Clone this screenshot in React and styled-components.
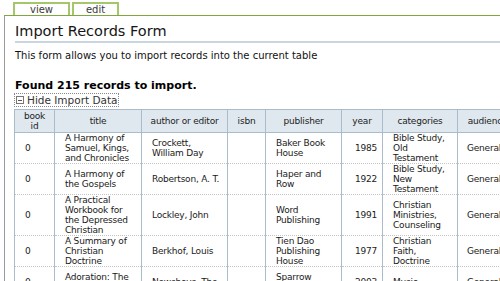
import React from "react";
import styled, { createGlobalStyle } from "styled-components";

const GlobalStyle = createGlobalStyle`
  html, body {
    margin: 0;
    padding: 0;
    background: #ffffff;
    overflow: hidden;
  }
  body {
    font-family: "DejaVu Sans", Verdana, sans-serif;
    color: #111;
  }
`;

const Page = styled.div`
  width: 500px;
  height: 281px;
  overflow: hidden;
`;

const Tabs = styled.div`
  display: flex;
  gap: 2px;
  padding: 2px 0 0 13px;
  height: 13px;
`;

const Tab = styled.div`
  width: ${(p) => p.$width}px;
  box-sizing: border-box;
  border: 2px solid #a3c76a;
  border-bottom: none;
  background: #fff;
  font-size: 10px;
  line-height: 11px;
  color: #3a3a3a;
  text-align: center;
`;

const Panel = styled.div`
  margin-left: 4px;
  border-top: 1px solid #7fa63f;
  border-left: 1px solid #9a9a9a;
  padding: 0 0 0 10px;
  height: 300px;
  font-size: 10px;
`;

const Title = styled.h1`
  margin: 7px 0 0;
  padding-bottom: 2px;
  font-size: 14.5px;
  font-weight: normal;
  color: #151515;
  border-bottom: 2px solid #c9d6df;
`;

const Intro = styled.p`
  margin: 6px 0 0;
  font-size: 10px;
  line-height: 13px;
  color: #111;
`;

const Found = styled.h2`
  margin: 17px 0 0;
  font-size: 11px;
  line-height: 14px;
  font-weight: bold;
  color: #000;
`;

const Toggle = styled.a`
  display: flex;
  width: max-content;
  align-items: center;
  gap: 3px;
  margin-top: 1px;
  font-size: 10.5px;
  line-height: 12px;
  color: #333;
  outline: 1px dotted #888;
  text-decoration: none;
`;

const ToggleBox = styled.span`
  display: inline-flex;
  align-items: center;
  justify-content: center;
  width: 6px;
  height: 6px;
  border: 1px solid #777;
  margin-left: 1px;
  &::after {
    content: "";
    width: 4px;
    height: 1px;
    background: #555;
  }
`;

const Table = styled.table`
  margin: 3px 0 0 -1px;
  border-collapse: collapse;
  table-layout: fixed;
  width: 503px;
  font-size: 9px;
  line-height: 10px;
  letter-spacing: -0.2px;
`;

const Col = styled.col`
  width: ${(p) => p.$width}px;
`;

const Head = styled.th`
  background: #dfe8ef;
  border: 1px solid #a9bccb;
  font-weight: normal;
  text-align: center;
  padding: 1px 6px;
  color: #222;
`;

const Cell = styled.td`
  border-left: 1px solid #a9bccb;
  border-right: 1px solid #a9bccb;
  border-bottom: 1px dotted #c4c4c4;
  padding: 0 2px 0 ${(p) => p.$pad || 10}px;
  vertical-align: middle;
  color: #1a1a1a;
  height: 30px;
`;

const columns = [
  { key: "id", label: "book id", width: 40 },
  { key: "title", label: "title", width: 87 },
  { key: "author", label: "author or editor", width: 86 },
  { key: "isbn", label: "isbn", width: 38 },
  { key: "publisher", label: "publisher", width: 76 },
  { key: "year", label: "year", width: 41, pad: 13 },
  { key: "categories", label: "categories", width: 75 },
  { key: "audience", label: "audience", width: 60, pad: 9 },
];

const records = [
  {
    id: "0",
    title: "A Harmony of Samuel, Kings, and Chronicles",
    author: "Crockett, William Day",
    isbn: "",
    publisher: "Baker Book House",
    year: "1985",
    categories: "Bible Study, Old Testament",
    audience: "General",
  },
  {
    id: "0",
    title: "A Harmony of the Gospels",
    author: "Robertson, A. T.",
    isbn: "",
    publisher: "Haper and Row",
    year: "1922",
    categories: "Bible Study, New Testament",
    audience: "General",
  },
  {
    id: "0",
    title: "A Practical Workbook for the Depressed Christian",
    author: "Lockley, John",
    isbn: "",
    publisher: "Word Publishing",
    year: "1991",
    categories: "Christian Ministries, Counseling",
    audience: "General",
  },
  {
    id: "0",
    title: "A Summary of Christian Doctrine",
    author: "Berkhof, Louis",
    isbn: "",
    publisher: "Tien Dao Publishing House",
    year: "1977",
    categories: "Christian Faith, Doctrine",
    audience: "General",
  },
  {
    id: "0",
    title: "Adoration: The Worship Album",
    author: "Newsboys, The",
    isbn: "",
    publisher: "Sparrow Records",
    year: "2003",
    categories: "Music",
    audience: "General",
  },
];

export default function App() {
  return (
    <Page>
      <GlobalStyle />
      <Tabs>
        <Tab $width={57}>view</Tab>
        <Tab $width={47}>edit</Tab>
      </Tabs>
      <Panel>
        <Title>Import Records Form</Title>
        <Intro>This form allows you to import records into the current table</Intro>
        <Found>Found 215 records to import.</Found>
        <Toggle href="#">
          <ToggleBox />
          Hide Import Data
        </Toggle>
        <Table>
          <colgroup>
            {columns.map((c) => (
              <Col key={c.key} $width={c.width} />
            ))}
          </colgroup>
          <thead>
            <tr>
              {columns.map((c) => (
                <Head key={c.key}>{c.label}</Head>
              ))}
            </tr>
          </thead>
          <tbody>
            {records.map((r) => (
              <tr key={r.title}>
                {columns.map((c) => (
                  <Cell key={c.key} $pad={c.pad}>
                    {r[c.key]}
                  </Cell>
                ))}
              </tr>
            ))}
          </tbody>
        </Table>
      </Panel>
    </Page>
  );
}
